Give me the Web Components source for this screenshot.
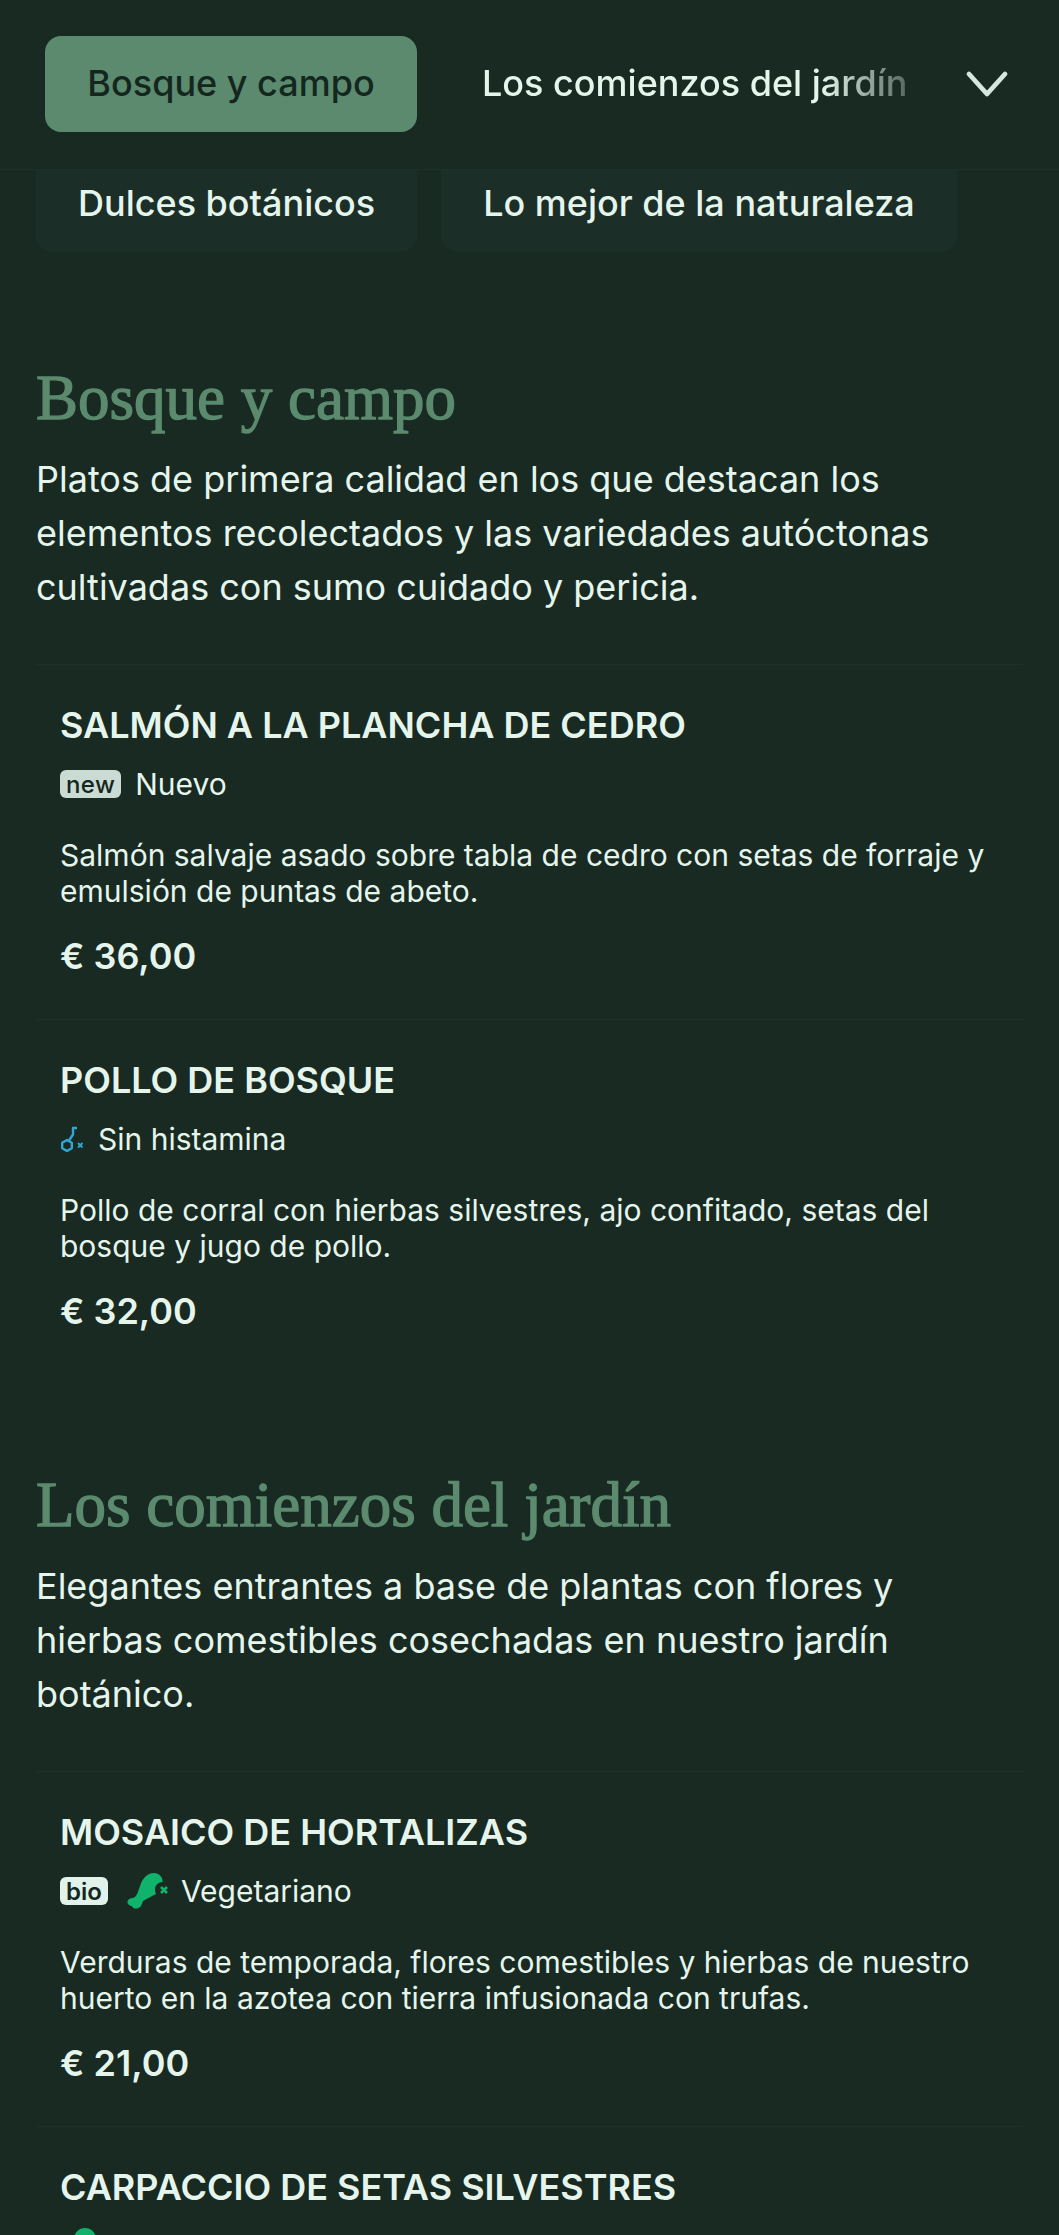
<!DOCTYPE html>
<html lang="es">
<head>
<meta charset="utf-8">
<title>Carta</title>
<style>
    html, body { margin: 0; height: 100%; overflow: hidden; background: #182a22; }
    body { font-family: Inter, "Liberation Sans", sans-serif; color: #e6f5ec; }
</style>
</head>
<body>
<menu-nav>
    <nav-tab active>Bosque y campo</nav-tab>
    <nav-tab fade>Los comienzos del jardín</nav-tab>
    <nav-tab slot="more" soft>Dulces botánicos</nav-tab>
    <nav-tab slot="more" soft>Lo mejor de la naturaleza</nav-tab>
</menu-nav>

<menu-section heading="Bosque y campo" style="margin-top: 108px">
    Platos de primera calidad en los que destacan los elementos recolectados y las variedades autóctonas cultivadas con sumo cuidado y pericia.
    <menu-item slot="items" name="SALMÓN A LA PLANCHA DE CEDRO" price="€ 36,00">
        <diet-tag slot="tags" label="Nuevo"><tag-badge muted>new</tag-badge></diet-tag>
        Salmón salvaje asado sobre tabla de cedro con setas de forraje y emulsión de puntas de abeto.
    </menu-item>
    <menu-item slot="items" name="POLLO DE BOSQUE" price="€ 32,00">
        <diet-tag slot="tags" label="Sin histamina">
            <svg width="24" height="26" viewBox="0 0 24 26" fill="none" stroke="#2fa8d5" stroke-width="2.400" stroke-linejoin="round">
                <path d="M7 14l4.800 2.800v5.400L7 25l-4.800-2.800v-5.400z"/>
                <path d="M9 14.500l4-6V2h4"/>
                <path d="M18 17l4.500 4.500m0-4.500L18 21.500" stroke-width="1.800"/>
            </svg>
        </diet-tag>
        Pollo de corral con hierbas silvestres, ajo confitado, setas del bosque y jugo de pollo.
    </menu-item>
</menu-section>

<menu-section heading="Los comienzos del jardín" style="margin-top: 93px">
    Elegantes entrantes a base de plantas con flores y hierbas comestibles cosechadas en nuestro jardín botánico.
    <menu-item slot="items" name="MOSAICO DE HORTALIZAS" price="€ 21,00">
        <diet-tag slot="tags" label="Vegetariano">
            <tag-badge>bio</tag-badge>
            <svg style="margin: 0 -2px 0 5px" width="42" height="36" viewBox="0 0 42 36" fill="none">
                <path d="M27 0C32 0 36 4 35.500 9C32 9 28 12 28 16C28 18 28.500 19.500 29 21C25 23 21 25 16 28L14.500 32C13 35 10 36 8 35.500C6 35.500 5 33.500 5 33C3 33 0 31 .5 28.500C1 26 4 25 6 25L8 24C11 21 12 15 15 8C18 3 22 0 27 0Z" fill="#10b36b"/>
                <path d="M34 14l6 6m0-6l-6 6" stroke="#10b36b" stroke-width="2.600"/>
            </svg>
        </diet-tag>
        Verduras de temporada, flores comestibles y hierbas de nuestro huerto en la azotea con tierra infusionada con trufas.
    </menu-item>
    <menu-item slot="items" name="CARPACCIO DE SETAS SILVESTRES">
        <diet-tag slot="tags" label="Vegano y hongos a la brasa">
            <svg width="36" height="36" viewBox="0 0 36 36"><circle cx="25" cy="11" r="11" fill="#10b36b"/></svg>
        </diet-tag>
    </menu-item>
</menu-section>

<script>
class NavTab extends HTMLElement {
    constructor() {
        super();
        this.attachShadow({ mode: 'open' });
        this.shadowRoot.innerHTML = `
            <style>
                :host {
                    display: flex;
                    align-items: center;
                    flex: none;
                    box-sizing: border-box;
                    height: 96px;
                    padding: 0 42px 2px;
                    font-size: 36px;
                    font-weight: 500;
                    color: #e6f5ec;
                    white-space: nowrap;
                }
                :host([active]) {
                    width: 372px;
                    padding: 0 0 2px;
                    justify-content: center;
                    background: #5b8a6f;
                    color: #14261e;
                    border-radius: 16px;
                }
                :host([fade]) {
                    flex: 1;
                    min-width: 0;
                    padding: 0 0 2px 65px;
                }
                :host([fade]) span {
                    display: block;
                    width: 100%;
                    overflow: hidden;
                    -webkit-mask-image: linear-gradient(to right, #000 80%, rgba(0,0,0,.3) 100%);
                    mask-image: linear-gradient(to right, #000 80%, rgba(0,0,0,.3) 100%);
                }
                :host([soft]) {
                    background: #1b2e27;
                    border-radius: 16px;
                }
            </style>
            <span><slot></slot></span>
        `;
    }
}

class MenuNav extends HTMLElement {
    constructor() {
        super();
        this.attachShadow({ mode: 'open' });
        this.shadowRoot.innerHTML = `
            <style>
                :host { display: block; }
                .bar {
                    position: relative;
                    z-index: 1;
                    display: flex;
                    align-items: center;
                    box-sizing: border-box;
                    height: 170px;
                    padding: 0 0 2px 45px;
                    background: #182a22;
                    border-bottom: 1px solid #1e3029;
                }
                .scroll { display: flex; align-items: center; width: 863px; flex: none; }
                .chev { flex: none; margin-left: 57px; display: flex; }
                .more { display: flex; gap: 24px; margin-top: -14px; padding: 0 36px; }
            </style>
            <div class="bar">
                <div class="scroll"><slot></slot></div>
                <span class="chev">
                    <svg width="44" height="28" viewBox="0 0 44 28" fill="none" stroke="#d5e7de" stroke-width="4.800" stroke-linecap="round" stroke-linejoin="round">
                        <path d="M4 4l18 20L40 4"/>
                    </svg>
                </span>
            </div>
            <div class="more"><slot name="more"></slot></div>
        `;
    }
}

class MenuSection extends HTMLElement {
    constructor() {
        super();
        this.attachShadow({ mode: 'open' });
        this.shadowRoot.innerHTML = `
            <style>
                :host { display: block; padding: 0 36px; }
                h2 {
                    margin: 0 0 16px;
                    font-family: "Liberation Serif", serif;
                    font-weight: 400;
                    font-size: 63px;
                    line-height: 76px;
                    -webkit-text-stroke: 1.300px #5b8a6f;
                    color: #5b8a6f;
                }
                p {
                    margin: 0 0 50px;
                    font-size: 36px;
                    line-height: 54px;
                    color: #e6f5ec;
                }
            </style>
            <h2></h2>
            <p><slot></slot></p>
            <slot name="items"></slot>
        `;
        this.shadowRoot.querySelector('h2').textContent = this.getAttribute('heading');
    }
}

class MenuItem extends HTMLElement {
    constructor() {
        super();
        this.attachShadow({ mode: 'open' });
        this.shadowRoot.innerHTML = `
            <style>
                :host {
                    display: block;
                    box-sizing: border-box;
                    height: 355px;
                    padding: 36px 24px 0;
                    border-top: 1px solid #1f3029;
                }
                .name {
                    font-size: 36px;
                    font-weight: 600;
                    line-height: 48px;
                    color: #e6f5ec;
                }
                .tags { display: flex; gap: 14px; margin-top: 11px; height: 48px; align-items: center; }
                .desc {
                    margin-top: 29px;
                    font-size: 30px;
                    line-height: 36px;
                    color: #e6f5ec;
                }
                .price {
                    margin-top: 23px;
                    font-size: 36px;
                    font-weight: 600;
                    line-height: 48px;
                    color: #e6f5ec;
                }
            </style>
            <div class="name"></div>
            <div class="tags"><slot name="tags"></slot></div>
            <div class="desc"><slot></slot></div>
            <div class="price"></div>
        `;
        this.shadowRoot.querySelector('.name').textContent = this.getAttribute('name');
        this.shadowRoot.querySelector('.price').textContent = this.getAttribute('price');
    }
}

class DietTag extends HTMLElement {
    constructor() {
        super();
        this.attachShadow({ mode: 'open' });
        this.shadowRoot.innerHTML = `
            <style>
                :host {
                    display: flex;
                    align-items: center;
                    gap: 14px;
                    font-size: 30px;
                    color: #e6f5ec;
                }
                .icons { display: flex; align-items: center; gap: 14px; }
            </style>
            <span class="icons"><slot></slot></span>
            <span class="label"></span>
        `;
        this.shadowRoot.querySelector('.label').textContent = this.getAttribute('label');
    }
}

class TagBadge extends HTMLElement {
    constructor() {
        super();
        this.attachShadow({ mode: 'open' });
        this.shadowRoot.innerHTML = `
            <style>
                :host {
                    display: inline-flex;
                    align-items: center;
                    box-sizing: border-box;
                    height: 28px;
                    padding: 0 6px;
                    border-radius: 6px;
                    background: #e0f2e9;
                    color: #14261e;
                    font-size: 24px;
                    font-weight: 600;
                }
                :host([muted]) { background: #c9dbd2; font-weight: 500; letter-spacing: .4px; }
            </style>
            <slot></slot>
        `;
    }
}

customElements.define('nav-tab', NavTab);
customElements.define('menu-nav', MenuNav);
customElements.define('menu-section', MenuSection);
customElements.define('menu-item', MenuItem);
customElements.define('diet-tag', DietTag);
customElements.define('tag-badge', TagBadge);
</script>
</body>
</html>
